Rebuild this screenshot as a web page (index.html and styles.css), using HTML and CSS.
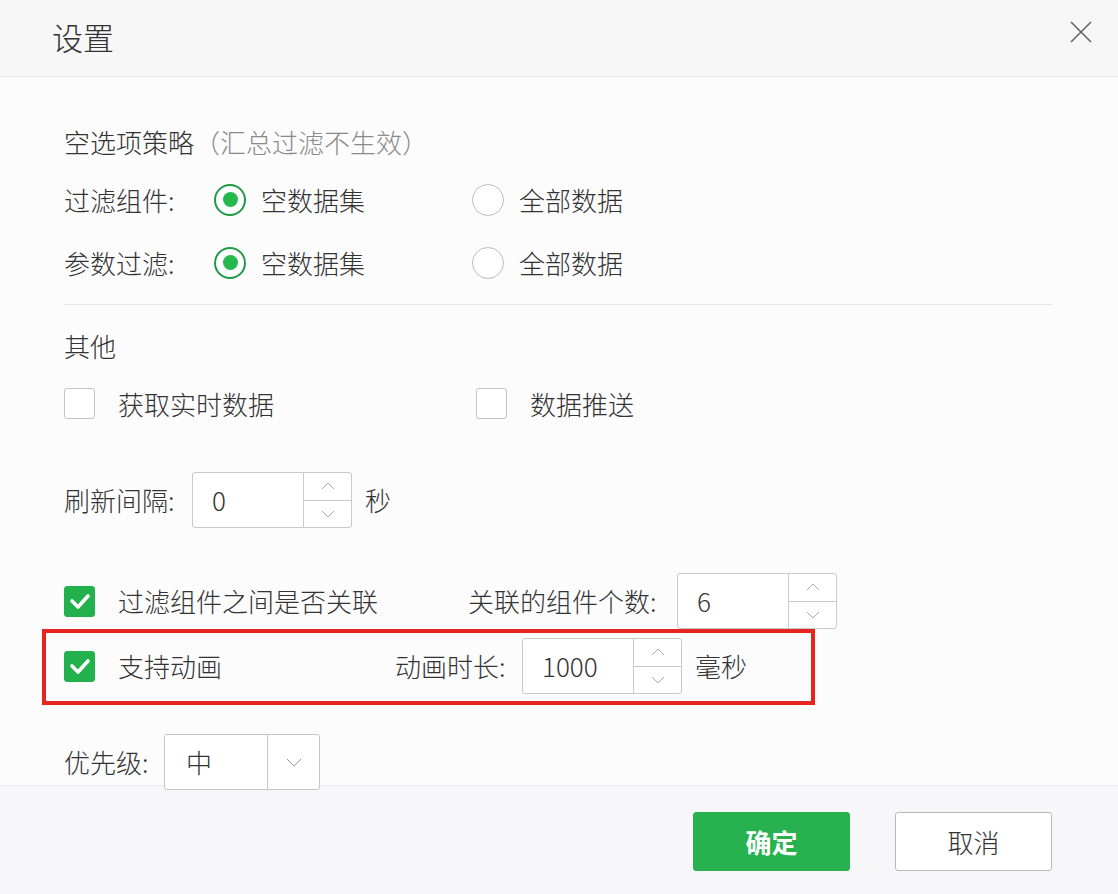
FILE: index.html
```html
<!DOCTYPE html>
<html lang="zh">
<head>
<meta charset="utf-8">
<link rel="stylesheet" href="styles.css">
</head>
<body>
<div class="dialog">
  <div class="header">
    <div class="title">设置</div>
    <svg class="close" width="24" height="24" viewBox="0 0 24 24"><path d="M2 2 L22 22 M22 2 L2 22" stroke="#666" stroke-width="1.6" fill="none"/></svg>
  </div>
  <div class="content">
    <div class="sec-title first">空选项策略<span class="muted">（汇总过滤不生效）</span></div>
    <div class="row radio-row">
      <div class="label w150">过滤组件:</div>
      <div class="opt w258"><span class="radio on"></span><span>空数据集</span></div>
      <div class="opt"><span class="radio"></span><span>全部数据</span></div>
    </div>
    <div class="row radio-row">
      <div class="label w150">参数过滤:</div>
      <div class="opt w258"><span class="radio on"></span><span>空数据集</span></div>
      <div class="opt"><span class="radio"></span><span>全部数据</span></div>
    </div>
    <div class="divider"></div>
    <div class="sec-title second">其他</div>
    <div class="row check-row">
      <div class="opt w412"><span class="cbox"></span><span>获取实时数据</span></div>
      <div class="opt"><span class="cbox"></span><span>数据推送</span></div>
    </div>
    <div class="row spin-row refresh">
      <div class="label w128">刷新间隔:</div>
      <div class="spinner"><div class="val">0</div><div class="btns"><div class="up"><svg width="14" height="8" viewBox="0 0 14 8"><path d="M1 7 L7 1 L13 7" stroke="#aaa" fill="none"/></svg></div><div class="down"><svg width="14" height="8" viewBox="0 0 14 8"><path d="M1 1 L7 7 L13 1" stroke="#aaa" fill="none"/></svg></div></div></div>
      <div class="unit">秒</div>
    </div>
    <div class="row spin-row link">
      <div class="opt w404"><span class="cbox on"><svg width="22" height="18" viewBox="0 0 22 18"><path d="M3 9 L9 15 L19 4" stroke="#fff" stroke-width="3.6" fill="none" stroke-linecap="round" stroke-linejoin="round"/></svg></span><span>过滤组件之间是否关联</span></div>
      <div class="label w209">关联的组件个数:</div>
      <div class="spinner"><div class="val">6</div><div class="btns"><div class="up"><svg width="14" height="8" viewBox="0 0 14 8"><path d="M1 7 L7 1 L13 7" stroke="#aaa" fill="none"/></svg></div><div class="down"><svg width="14" height="8" viewBox="0 0 14 8"><path d="M1 1 L7 7 L13 1" stroke="#aaa" fill="none"/></svg></div></div></div>
    </div>
    <div class="redbox">
      <div class="row spin-row anim">
        <div class="opt w331"><span class="cbox on"><svg width="22" height="18" viewBox="0 0 22 18"><path d="M3 9 L9 15 L19 4" stroke="#fff" stroke-width="3.6" fill="none" stroke-linecap="round" stroke-linejoin="round"/></svg></span><span>支持动画</span></div>
        <div class="label w127">动画时长:</div>
        <div class="spinner"><div class="val">1000</div><div class="btns"><div class="up"><svg width="14" height="8" viewBox="0 0 14 8"><path d="M1 7 L7 1 L13 7" stroke="#aaa" fill="none"/></svg></div><div class="down"><svg width="14" height="8" viewBox="0 0 14 8"><path d="M1 1 L7 7 L13 1" stroke="#aaa" fill="none"/></svg></div></div></div>
        <div class="unit">毫秒</div>
      </div>
    </div>
    <div class="row spin-row prio">
      <div class="label w100">优先级:</div>
      <div class="select"><div class="val">中</div><div class="arrow"><svg width="16" height="9" viewBox="0 0 16 9"><path d="M1 1 L8 8 L15 1" stroke="#999" fill="none"/></svg></div></div>
    </div>
  </div>
  <div class="footer">
    <button class="btn primary">确定</button>
    <button class="btn">取消</button>
  </div>
</div>
</body>
</html>
```

FILE: styles.css
```css
* { box-sizing: border-box; }
html, body { margin: 0; padding: 0; }
body {
  width: 1118px;
  height: 894px;
  overflow: hidden;
  font-family: "Noto Sans CJK SC", "Noto Sans", sans-serif;
  font-weight: 300;
  color: #333;
  background: #fdfcfd;
}
.dialog { display: flex; flex-direction: column; height: 894px; }
.header {
  height: 77px;
  background: #f7f7f8;
  border-bottom: 1px solid #e8e8ea;
  display: flex;
  align-items: center;
  justify-content: space-between;
  padding: 0 25px 0 52px;
  flex-shrink: 0;
}
.title { font-size: 31px; line-height: 1; color: #333; margin-top: -3px; }
.close { margin-top: -12px; }
.content {
  height: 708px;
  flex-shrink: 0;
  padding: 0 66px 0 64px;
  background: #fdfcfd;
  font-size: 26px;
}
.sec-title { height: 52px; display: flex; align-items: center; line-height: 1; }
.sec-title.first { margin-top: 39px; }
.sec-title.second { margin-top: 15px; }
.muted { color: #8a8a8a; }
.divider { height: 1px; background: #e4e4e6; margin-top: 10px; }
.row { display: flex; align-items: center; line-height: 1; }
.radio-row { height: 63px; }
.check-row { height: 63px; }
.spin-row { height: 56px; }
.refresh { margin-top: 37px; }
.link { margin-top: 45px; }
.prio { margin-top: 29px; }
.label { flex-shrink: 0; white-space: nowrap; }
.w150 { width: 150px; }
.w128 { width: 128px; }
.w100 { width: 100px; }
.w209 { width: 209px; }
.w127 { width: 127px; }
.opt { display: flex; align-items: center; flex-shrink: 0; }
.w258 { width: 258px; }
.w412 { width: 412px; }
.w404 { width: 404px; }
.w331 { width: 331px; }
.radio {
  width: 32px; height: 32px; border-radius: 50%;
  border: 1.5px solid #bdbdbd;
  margin-right: 15px;
  display: flex; align-items: center; justify-content: center;
  background: #fff;
}
.radio.on { border: 2px solid #1f9a45; }
.radio.on::after {
  content: ""; width: 15px; height: 15px; border-radius: 50%; background: #25b94d;
}
.cbox {
  width: 31px; height: 31px; border-radius: 3px;
  border: 1.5px solid #c4c4c4;
  margin-right: 23px;
  background: #fff;
  display: flex; align-items: center; justify-content: center;
}
.cbox.on { background: #22b14c; border-color: #22b14c; }
.spinner {
  width: 160px; height: 56px;
  border: 1.5px solid #cacaca; border-radius: 3px;
  display: flex; background: #fff;
  flex-shrink: 0;
}
.spinner .val { flex: 1; display: flex; align-items: center; padding-left: 19px; font-size: 26px; }
.spinner .btns { width: 48px; border-left: 1.5px solid #cacaca; display: flex; flex-direction: column; }
.spinner .up, .spinner .down { flex: 1; display: flex; align-items: center; justify-content: center; }
.spinner .up { border-bottom: 1.5px solid #cacaca; }
.unit { margin-left: 13px; }
.redbox {
  margin-left: -22px;
  width: 773px;
  height: 76px;
  border: 4px solid #e8241f;
  padding: 5px 0 0 18px;
}
.select {
  position: relative; z-index: 1;
  width: 156px; height: 56px;
  border: 1.5px solid #c6c6c6; border-radius: 3px;
  display: flex; background: #fff;
}
.select .val { flex: 1; display: flex; align-items: center; padding-left: 21px; }
.select .arrow { width: 52px; border-left: 1.5px solid #c6c6c6; display: flex; align-items: center; justify-content: center; }
.footer {
  flex: 1;
  background: #f7f6f8;
  border-top: 1.5px solid #ebebed;
  display: flex;
  justify-content: flex-end;
  align-items: flex-start;
  padding: 26px 66px 0 0;
  gap: 45px;
}
.btn {
  width: 157px; height: 59px;
  font-family: "Noto Sans CJK SC", sans-serif;
  font-size: 26px;
  font-weight: 300;
  border-radius: 3px;
  border: 1.5px solid #b9b9b9;
  background: #fff;
  color: #333;
  padding: 0;
}
.btn.primary { background: #27b24f; border-color: #27b24f; color: #fff; font-weight: bold; }
```
